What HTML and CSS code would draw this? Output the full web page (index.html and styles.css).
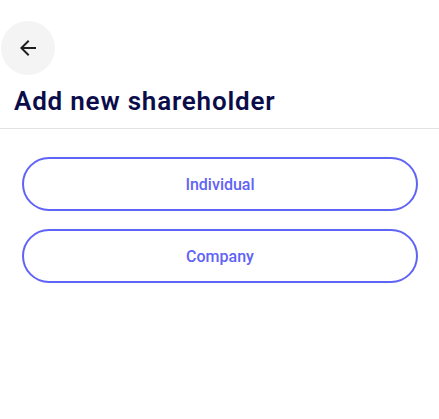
FILE: index.html
```html
<!DOCTYPE html>
<html lang="en">
<head>
<meta charset="utf-8">
<title>Add new shareholder</title>
<link rel="stylesheet" href="styles.css">
</head>
<body>
<header class="header">
  <button class="back" aria-label="Back">
    <svg viewBox="0 0 24 24" width="24" height="24"><path d="M20 11H7.83l5.59-5.59L12 4l-8 8 8 8 1.41-1.41L7.83 13H20v-2z" fill="#1f1f1f"/></svg>
  </button>
  <h1 class="title">Add new shareholder</h1>
</header>
<main class="options">
  <button class="option">Individual</button>
  <button class="option">Company</button>
</main>
</body>
</html>
```
FILE: styles.css
```css
* { box-sizing: border-box; }
html, body { margin: 0; background: #fff; }
body { font-family: Roboto, "Noto Sans", sans-serif; }
.header {
  padding: 21px 0 0 0;
  border-bottom: 1px solid #e2e2e2;
}
.back {
  display: flex;
  align-items: center;
  justify-content: center;
  width: 54px;
  height: 54px;
  margin-left: 1px;
  border: none;
  border-radius: 50%;
  background: #f4f4f4;
  padding: 0;
}
.title {
  margin: 10px 0 0 14px;
  font-size: 26px;
  line-height: 32px;
  font-weight: 600;
  letter-spacing: 0.8px;
  color: #0b0d4a;
  padding-bottom: 11px;
}
.options {
  display: flex;
  flex-direction: column;
  gap: 18px;
  padding: 28px 21px 0 22px;
}
.option {
  height: 54px;
  border: 2px solid #5f63f6;
  border-radius: 27px;
  background: #fff;
  color: #5f63f6;
  font-family: Roboto, sans-serif;
  font-size: 16px;
  font-weight: 500;
}
```
